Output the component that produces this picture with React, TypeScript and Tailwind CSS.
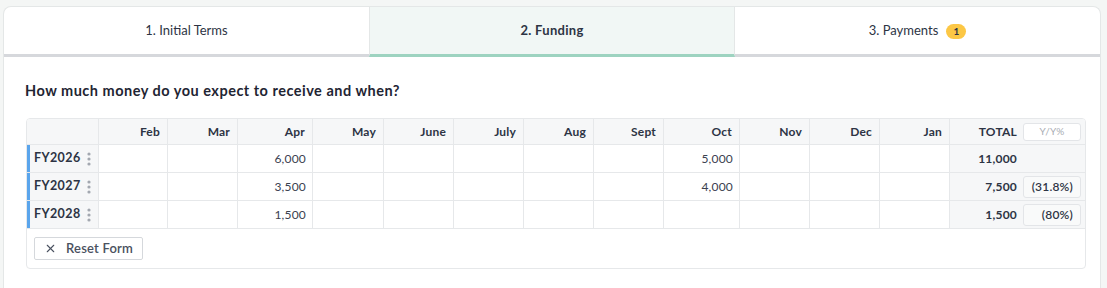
import React from 'react';
import { X } from 'lucide-react';

const months = [
  { name: 'Feb', w: 'w-[69px]' },
  { name: 'Mar', w: 'w-[70px]' },
  { name: 'Apr', w: 'w-[75px]' },
  { name: 'May', w: 'w-[71px]' },
  { name: 'June', w: 'w-[70px]' },
  { name: 'July', w: 'w-[70px]' },
  { name: 'Aug', w: 'w-[70px]' },
  { name: 'Sept', w: 'w-[70px]' },
  { name: 'Oct', w: 'w-[76px]' },
  { name: 'Nov', w: 'w-[70px]' },
  { name: 'Dec', w: 'w-[70px]' },
  { name: 'Jan', w: 'w-[70px]' },
];

const rows = [
  { label: 'FY2026', values: { Apr: '6,000', Oct: '5,000' } as Record<string, string>, total: '11,000', yoy: '' },
  { label: 'FY2027', values: { Apr: '3,500', Oct: '4,000' } as Record<string, string>, total: '7,500', yoy: '(31.8%)' },
  { label: 'FY2028', values: { Apr: '1,500' } as Record<string, string>, total: '1,500', yoy: '(80%)' },
];

const Kebab = () => (
  <svg width="4" height="14" viewBox="0 0 4 14" className="text-[#a3a8b0]">
    <circle cx="2" cy="2" r="1.6" fill="currentColor" />
    <circle cx="2" cy="7" r="1.6" fill="currentColor" />
    <circle cx="2" cy="12" r="1.6" fill="currentColor" />
  </svg>
);

const App: React.FC = () => {
  return (
    <div className="w-[1107px] h-[288px] bg-[#f4f6f5] pt-[6px] pl-[3px] pr-[6px] overflow-hidden text-[#2d3444]" style={{ fontFamily: 'Lato, "Noto Sans", sans-serif' }}>
      <div className="h-full bg-white border border-[#e4e7e7] border-b-0 rounded-t-[8px] overflow-hidden">
        {/* tabs */}
        <div className="flex h-[50px]">
          <div className="flex-1 flex items-center justify-center text-[13px] border-b-[3px] border-[#d6d8dc]">
            <span className="mt-[1px]">1. Initial Terms</span>
          </div>
          <div className="w-[366px] flex items-center justify-center text-[13px] font-bold tracking-[0.3px] bg-[#f1f7f5] border-x border-[#e4e7e7] border-b-[3px] border-b-[#9dd3c0]">
            <span className="mt-[1px]">2. Funding</span>
          </div>
          <div className="flex-1 flex items-center justify-center gap-[8px] text-[13px] border-b-[3px] border-[#d6d8dc]">
            <span className="mt-[1px]">3. Payments</span>
            <span className="mt-[1px] h-[15px] w-[20px] rounded-full bg-[#fcc745] text-[10px] font-bold flex items-center justify-center">1</span>
          </div>
        </div>

        <div className="pl-[21px] pt-[24px]">
          <h2 className="text-[14.5px] font-bold tracking-[0.5px] text-[#1f2533] leading-[20px]">How much money do you expect to receive and when?</h2>

          <div className="ml-[1px] mt-[17px] w-[1060px] border border-[#e6e8ea] rounded-[4px] overflow-hidden text-[12px]">
            {/* header */}
            <div className="flex h-[26px] bg-[#f6f7f8] border-b border-[#e6e8ea] font-bold tracking-[0.2px] text-[#2d3444]">
              <div className="w-[72px] border-r border-[#e6e8ea]" />
              {months.map((m) => (
                <div key={m.name} className={`${m.w} border-r border-[#e6e8ea] flex items-center justify-end pr-[7px]`}>
                  {m.name}
                </div>
              ))}
              <div className="flex-1 flex items-center justify-end gap-[6px] pr-[4px]">
                <span>TOTAL</span>
                <span className="w-[58px] h-[18px] border border-[#e3e5e8] rounded-[3px] bg-white text-[10px] font-normal text-[#a9adb4] flex items-center justify-center">Y/Y%</span>
              </div>
            </div>

            {rows.map((r) => (
              <div key={r.label} className="flex h-[28px] border-b border-[#e6e8ea]">
                <div className="w-[72px] bg-[#f6f7f8] border-l-[3px] border-l-[#5aa5ec] border-r border-[#e6e8ea] flex items-center justify-between pl-[4px] pr-[7px] text-[12.5px] font-bold tracking-[0.4px]">
                  <span>{r.label}</span>
                  <Kebab />
                </div>
                {months.map((m) => (
                  <div key={m.name} className={`${m.w} border-r border-[#e6e8ea] flex items-center justify-end pr-[6px] text-[#3a4150] tracking-[0.2px]`}>
                    {r.values[m.name] ?? ''}
                  </div>
                ))}
                <div className="flex-1 bg-[#f6f7f8] flex items-center justify-end gap-[6px] pr-[4px] font-bold tracking-[0.2px]">
                  <span>{r.total}</span>
                  {r.yoy ? (
                    <span className="w-[58px] h-[22px] border border-[#e3e5e8] rounded-[3px] bg-[#f9fafa] font-semibold flex items-center justify-end pr-[7px]">{r.yoy}</span>
                  ) : (
                    <span className="w-[58px]" />
                  )}
                </div>
              </div>
            ))}

            <div className="pl-[7px] pt-[8px] pb-[8px]">
              <button className="h-[23px] pl-[9px] pr-[9px] border border-[#d5d8dc] rounded-[2px] flex items-center gap-[9px] text-[13px] font-semibold tracking-[0.2px] text-[#4a5160]">
                <X size={13} strokeWidth={2} />
                Reset Form
              </button>
            </div>
          </div>
        </div>
      </div>
    </div>
  );
};

export default App;
